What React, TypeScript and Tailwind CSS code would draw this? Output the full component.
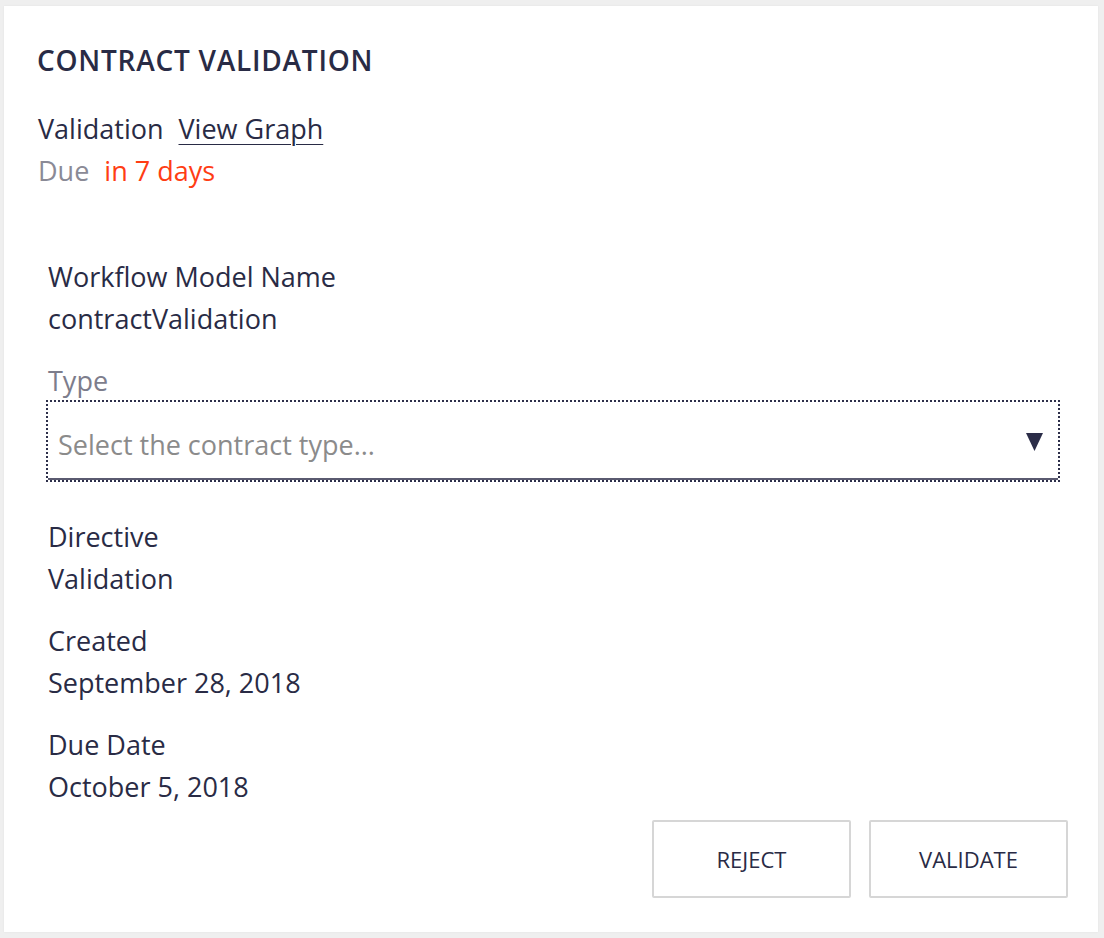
import React from "react";

const fields: { label: string; value: string }[] = [
  { label: "Directive", value: "Validation" },
  { label: "Created", value: "September 28, 2018" },
  { label: "Due Date", value: "October 5, 2018" },
];

export default function App() {
  return (
    <div
      className="min-h-[938px] w-[1104px] bg-[#efefef] pl-[4px] pr-[6px] pt-[6px] pb-[6px] text-[#292b45]"
      style={{ fontFamily: "'Open Sans', 'Noto Sans', sans-serif" }}
    >
      <div className="bg-white pl-[32px] pr-[30px] pt-[34px] pb-[34px] shadow-[0_0_2px_rgba(0,0,0,0.06)]">
        {/* header */}
        <h1 className="pl-[1px] text-[28px] font-semibold leading-[40px] tracking-[0.027em]">
          CONTRACT VALIDATION
        </h1>
        <div className="mt-[28px] pl-[2px] text-[27px] leading-[42px]">
          <div>
            Validation
            <a href="#" className="ml-[15px] underline decoration-1 underline-offset-[5px]">
              View Graph
            </a>
          </div>
          <div>
            <span className="text-[#8a8a96]">Due</span>
            <span className="ml-[15px] text-[#ff3d14]">in 7 days</span>
          </div>
        </div>

        {/* details */}
        <div className="mt-[64px] pl-[11px] pr-[10px] text-[27px] leading-[42px]">
          <div className="pl-[1px]">
            <div>Workflow Model Name</div>
            <div>contractValidation</div>
          </div>

          <div className="mt-[20px] pl-[1px] text-[#7d7d8c]">Type</div>
          <div className="ml-[1px] flex h-[78px] items-center justify-between border-b-2 border-[#5a5a70] pl-[10px] pr-[15px] outline-2 outline-dotted outline-[#2d2f4a]">
            <span className="mt-[10px] text-[#8b8b8b]">Select the contract type...</span>
            <svg width="17" height="18" viewBox="0 0 17 18" className="mt-[4px]">
              <polygon points="0,0 17,0 8.5,18" fill="#2b2d48" />
            </svg>
          </div>

          <div className="mt-[36px] flex flex-col gap-[20px] pl-[1px]">
            {fields.map((f) => (
              <div key={f.label}>
                <div>{f.label}</div>
                <div>{f.value}</div>
              </div>
            ))}
          </div>
        </div>

        {/* actions */}
        <div className="mt-[12px] flex justify-end gap-[18px] text-[22px]">
          <button className="h-[78px] w-[199px] rounded-[2px] border-2 border-[#d6d6d6] bg-white">
            REJECT
          </button>
          <button className="h-[78px] w-[199px] rounded-[2px] border-2 border-[#d6d6d6] bg-white">
            VALIDATE
          </button>
        </div>
      </div>
    </div>
  );
}
